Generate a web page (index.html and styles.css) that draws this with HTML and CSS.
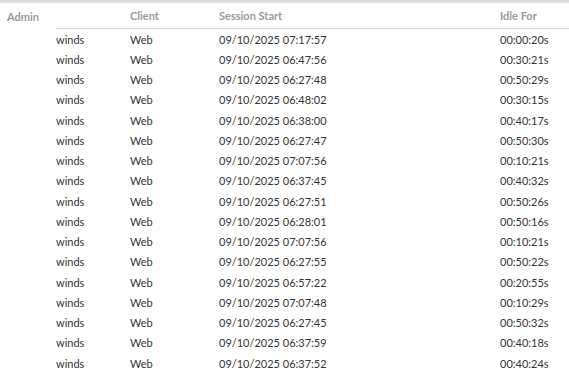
FILE: index.html
```
<!DOCTYPE html>
<html>
<head>
<meta charset="utf-8">
<link rel="stylesheet" href="styles.css">
</head>
<body>
<div class="topbar"></div>
<div class="table">
  <div class="row head">
    <div class="cell admin">Admin</div>
    <div class="cell user"></div>
    <div class="cell">Client</div>
    <div class="cell">Session Start</div>
    <div class="cell">Idle For</div>
  </div>
  <div class="row"><div class="cell admin"></div><div class="cell user">winds</div><div class="cell">Web</div><div class="cell">09/10/2025 07:17:57</div><div class="cell">00:00:20s</div></div>
  <div class="row"><div class="cell admin"></div><div class="cell user">winds</div><div class="cell">Web</div><div class="cell">09/10/2025 06:47:56</div><div class="cell">00:30:21s</div></div>
  <div class="row"><div class="cell admin"></div><div class="cell user">winds</div><div class="cell">Web</div><div class="cell">09/10/2025 06:27:48</div><div class="cell">00:50:29s</div></div>
  <div class="row"><div class="cell admin"></div><div class="cell user">winds</div><div class="cell">Web</div><div class="cell">09/10/2025 06:48:02</div><div class="cell">00:30:15s</div></div>
  <div class="row"><div class="cell admin"></div><div class="cell user">winds</div><div class="cell">Web</div><div class="cell">09/10/2025 06:38:00</div><div class="cell">00:40:17s</div></div>
  <div class="row"><div class="cell admin"></div><div class="cell user">winds</div><div class="cell">Web</div><div class="cell">09/10/2025 06:27:47</div><div class="cell">00:50:30s</div></div>
  <div class="row"><div class="cell admin"></div><div class="cell user">winds</div><div class="cell">Web</div><div class="cell">09/10/2025 07:07:56</div><div class="cell">00:10:21s</div></div>
  <div class="row"><div class="cell admin"></div><div class="cell user">winds</div><div class="cell">Web</div><div class="cell">09/10/2025 06:37:45</div><div class="cell">00:40:32s</div></div>
  <div class="row"><div class="cell admin"></div><div class="cell user">winds</div><div class="cell">Web</div><div class="cell">09/10/2025 06:27:51</div><div class="cell">00:50:26s</div></div>
  <div class="row"><div class="cell admin"></div><div class="cell user">winds</div><div class="cell">Web</div><div class="cell">09/10/2025 06:28:01</div><div class="cell">00:50:16s</div></div>
  <div class="row"><div class="cell admin"></div><div class="cell user">winds</div><div class="cell">Web</div><div class="cell">09/10/2025 07:07:56</div><div class="cell">00:10:21s</div></div>
  <div class="row"><div class="cell admin"></div><div class="cell user">winds</div><div class="cell">Web</div><div class="cell">09/10/2025 06:27:55</div><div class="cell">00:50:22s</div></div>
  <div class="row"><div class="cell admin"></div><div class="cell user">winds</div><div class="cell">Web</div><div class="cell">09/10/2025 06:57:22</div><div class="cell">00:20:55s</div></div>
  <div class="row"><div class="cell admin"></div><div class="cell user">winds</div><div class="cell">Web</div><div class="cell">09/10/2025 07:07:48</div><div class="cell">00:10:29s</div></div>
  <div class="row"><div class="cell admin"></div><div class="cell user">winds</div><div class="cell">Web</div><div class="cell">09/10/2025 06:27:45</div><div class="cell">00:50:32s</div></div>
  <div class="row"><div class="cell admin"></div><div class="cell user">winds</div><div class="cell">Web</div><div class="cell">09/10/2025 06:37:59</div><div class="cell">00:40:18s</div></div>
  <div class="row"><div class="cell admin"></div><div class="cell user">winds</div><div class="cell">Web</div><div class="cell">09/10/2025 06:37:52</div><div class="cell">00:40:24s</div></div>
</div>
</body>
</html>
```
FILE: styles.css
```
html, body {
  margin: 0;
  padding: 0;
  background: #fff;
}
body {
  font-family: Lato, "Open Sans", sans-serif;
  font-size: 11px;
  color: #333;
  overflow: hidden;
}
.topbar {
  height: 3px;
  background: #dcdcdc;
}
.row {
  display: grid;
  grid-template-columns: 56px 74px 89px 281px 1fr;
  height: 20.25px;
  align-items: center;
}
.head {
  height: 26px;
  font-weight: bold;
  color: #9a9a9a;
}
.head .cell {
  height: 26px;
  display: flex;
  align-items: center;
  box-sizing: border-box;
  border-bottom: 1px solid #dcdcdc;
}
.head .cell.admin {
  border-bottom: none;
  padding-left: 7px;
}
.cell {
  white-space: nowrap;
}
```
